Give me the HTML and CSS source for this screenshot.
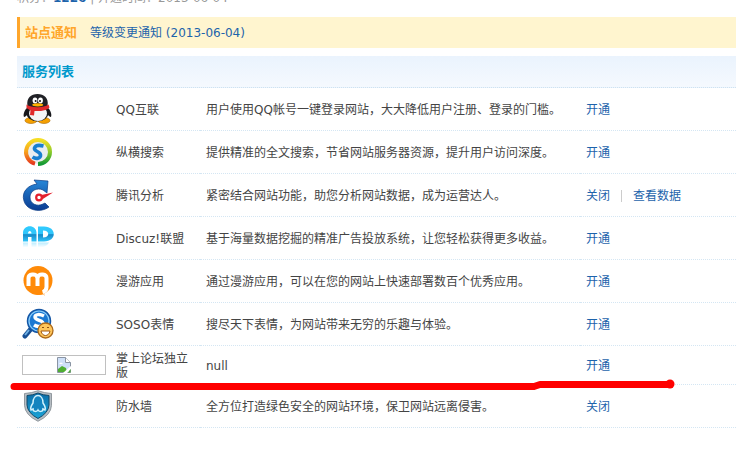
FILE: index.html
```html
<!DOCTYPE html>
<html lang="zh-CN">
<head>
<meta charset="utf-8">
<title>服务列表</title>
<link rel="stylesheet" href="styles.css">
</head>
<body>
<main class="page">
  <p class="summary">积分：<a href="#">1226</a> | 开通时间：2013-06-04</p>
  <div class="notice"><strong>站点通知</strong><a href="#">等级变更通知 (2013-06-04)</a></div>
  <section class="services">
    <table>
      <colgroup><col class="col-icon"><col class="col-name"><col class="col-text"><col></colgroup>
      <thead><tr><th colspan="4">服务列表</th></tr></thead>
      <tbody>
        <tr>
          <td><svg class="icon" viewBox="0 0 32 32" aria-hidden="true">
            <ellipse cx="9" cy="27.500" rx="6" ry="3" fill="#f5a000" stroke="#a86400" stroke-width=".6"/><ellipse cx="22" cy="27.500" rx="6" ry="3" fill="#f5a000" stroke="#a86400" stroke-width=".6"/>
            <path d="M6 14C2 17 1 22 2 24c1 0 3-2 4-3zM25 14c4 3 5 8 4 10-1 0-3-2-4-3z" fill="#17181c"/>
            <ellipse cx="15.500" cy="20" rx="11" ry="8.500" fill="#17181c"/><ellipse cx="16" cy="20.500" rx="9" ry="7.500" fill="#f4f5f7"/>
            <path d="M5.500 13C4 5 9 1 15.500 1S27 5 25.500 13c-3 4-17 4-20 0z" fill="#202126"/>
            <ellipse cx="13" cy="7.500" rx="2.400" ry="3" fill="#fff"/><ellipse cx="18.500" cy="7.500" rx="2.400" ry="3" fill="#fff"/><circle cx="13.600" cy="8" r="1" fill="#111"/><circle cx="18" cy="8" r="1" fill="#111"/>
            <ellipse cx="15.700" cy="11.800" rx="5.500" ry="1.600" fill="#ffb000"/>
            <path d="M4.500 11.500c5 3.500 17 3.500 22 0l1 3c-3 3-9 4-15 3.500l-.5 4.500-4-.5.500-4.500-4-2.500z" fill="#e02a2c"/>
          </svg></td>
          <td>QQ互联</td><td>用户使用QQ帐号一键登录网站，大大降低用户注册、登录的门槛。</td><td><a href="#">开通</a></td>
        </tr>
        <tr>
          <td><svg class="icon" viewBox="0 0 32 32" aria-hidden="true">
            <defs><linearGradient id="ringL" x2="0" y2="1"><stop stop-color="#f7dc23"/><stop offset=".5" stop-color="#f7a11d"/><stop offset="1" stop-color="#e63a1e"/></linearGradient><linearGradient id="ringR" x2="0" y2="1"><stop stop-color="#f3df28"/><stop offset=".5" stop-color="#8ccb2b"/><stop offset="1" stop-color="#149a35"/></linearGradient></defs>
            <circle cx="16" cy="16" r="12" fill="#e9edf0"/>
            <path d="M16.500 4a12 12 0 0 0-3.500 23.600" fill="none" stroke="url(#ringL)" stroke-width="4"/><path d="M16 4a12 12 0 0 1 0 24" fill="none" stroke="url(#ringR)" stroke-width="4"/>
            <path d="M21.500 10c-4-1-8-1-9 2-1 4 7 3 6 8-1 3-5 3-8 1" fill="none" stroke="#197fd0" stroke-width="3.600"/>
          </svg></td>
          <td>纵横搜索</td><td>提供精准的全文搜索，节省网站服务器资源，提升用户访问深度。</td><td><a href="#">开通</a></td>
        </tr>
        <tr>
          <td><svg class="icon" viewBox="0 0 32 32" aria-hidden="true">
            <defs><linearGradient id="dial" x2="0" y2="1"><stop stop-color="#2787d8"/><stop offset="1" stop-color="#0b3d93"/></linearGradient></defs>
            <path d="M12 1l14 1-1 12-4-3C15 8 8 12 8 18c0 7 7 10 13 7l2-1 4 4C19 34 5 32 2 22-1 13 6 6 15 5z" fill="url(#dial)" stroke="#0b3b84" stroke-width=".7"/>
            <path d="M31 13.500l-11 7-3-4z" fill="#e3202d"/><circle cx="17" cy="18.500" r="2.800" fill="#fff" stroke="#e3202d" stroke-width="2.200"/>
          </svg></td>
          <td>腾讯分析</td><td>紧密结合网站功能，助您分析网站数据，成为运营达人。</td><td><a href="#">关闭</a><span class="divider"></span><a href="#">查看数据</a></td>
        </tr>
        <tr>
          <td><svg class="icon" viewBox="0 0 32 32" aria-hidden="true">
            <defs><linearGradient id="ad" x2="0" y2="1"><stop stop-color="#30cbff"/><stop offset=".5" stop-color="#30c5fa"/><stop offset=".55" stop-color="#1689c8"/><stop offset="1" stop-color="#30c5fa"/></linearGradient><linearGradient id="reflect" x2="0" y2="1"><stop stop-color="#b9ecff"/><stop offset="1" stop-color="#fff"/></linearGradient></defs>
            <path d="M1 19.500V11C1 2 14.500 2 14.500 11v8.500h-5V15H6v4.500zm5-8h3.500C9.500 8 6 8 6 11.500zM16 4.500h6c13 0 13 15 0 15h-6zm5 4v7c7 0 7-7 0-7z" fill="url(#ad)" fill-rule="evenodd"/>
            <path d="M1 20.500h5v5H1zm8.500 0h5v5h-5zm6.500 0h11c-2 4-6 5-11 5z" fill="url(#reflect)"/>
          </svg></td>
          <td>Discuz!联盟</td><td>基于海量数据挖掘的精准广告投放系统，让您轻松获得更多收益。</td><td><a href="#">开通</a></td>
        </tr>
        <tr>
          <td><svg class="icon" viewBox="0 0 32 32" aria-hidden="true">
            <circle cx="16" cy="15.500" r="14.500" fill="#ff8a08"/>
            <path d="M6.500 21v-8c0-4 7-5 9-1 2-4 9-3 9 1v9q0 4-4 5" fill="none" stroke="#fff" stroke-width="4"/><path d="M15.500 12v9" stroke="#fff" stroke-width="4"/><path d="M8 24h13l-2 3 4 4-1-2c-6 2-11 0-14-5z" fill="#ff8a08"/>
          </svg></td>
          <td>漫游应用</td><td>通过漫游应用，可以在您的网站上快速部署数百个优秀应用。</td><td><a href="#">开通</a></td>
        </tr>
        <tr>
          <td><svg class="icon" viewBox="0 0 32 32" aria-hidden="true">
            <path d="M8 22l-5 6" stroke="#174f94" stroke-width="5" stroke-linecap="round"/><path d="M7 22l-4 5" stroke="#6eafe2" stroke-width="2"/>
            <circle cx="17" cy="13" r="11.500" fill="#1b78d2" stroke="#1556a4" stroke-width="1.500"/><circle cx="17" cy="13" r="10" fill="none" stroke="#8ccdf9" stroke-width="1.200"/>
            <path d="M22 8c-4-2-9-2-9 1 0 4 9 3 8 7-1 3-6 3-9 1" fill="none" stroke="#fff" stroke-width="3.500"/>
            <circle cx="23.500" cy="22.500" r="7.500" fill="#ffc65b" stroke="#ad6a1b" stroke-width="1.300"/><path d="M19 23h9c-1 6-8 6-9 0z" fill="#fff" stroke="#a45b12"/><path d="M20 20q1-2 2 0M25 20q1-2 2 0" fill="none" stroke="#8d4e0f"/>
          </svg></td>
          <td>SOSO表情</td><td>搜尽天下表情，为网站带来无穷的乐趣与体验。</td><td><a href="#">开通</a></td>
        </tr>
        <tr>
          <td><span class="missing"><svg viewBox="0 0 16 16" aria-hidden="true">
            <path d="M1.500.5h8l5 5v10h-13z" fill="#cfe0f8" stroke="#8a94a3"/><path d="M9.500.5v5h5" fill="#fff" stroke="#8a94a3"/><path d="M2 15v-3l4-3 4 2 1 4z" fill="#4fae32"/><path d="M3 7q2-3 4 0z" fill="#fff"/><path d="M7 16l9-8v3l-5 5z" fill="#fff"/><path d="M12 15.500h2.500V12z" fill="#4fae32"/>
          </svg></span></td>
          <td>掌上论坛独立版</td><td>null</td><td><a href="#">开通</a></td>
        </tr>
        <tr>
          <td><svg class="icon" viewBox="0 0 32 32" aria-hidden="true">
            <defs><linearGradient id="shield" x2="0" y2="1"><stop stop-color="#0c6ea9"/><stop offset="1" stop-color="#1ba3d6"/></linearGradient></defs>
            <path d="M2.500 3.500Q10 3 16 .7q6 2.300 13.500 2.800v12Q29 25 16 31.300 3 25 2.500 15.500z" fill="#b7bec4" stroke="#7d868d" stroke-width=".8"/>
            <path d="M5 5.500q6-.3 11-2.500 5 2.200 11 2.500V15q-.5 8-11 13.500Q5.500 23 5 15z" fill="url(#shield)" stroke="#134969"/>
            <path d="M11 13c0-10 10-10 10 0 2 3 3 5 2 7l-2-1c0 3-4 3-5 1-1 2-5 2-5-1l-2 1c-1-2 0-4 2-7z" fill="#1484bf" stroke="#d2f2fd" stroke-width="1.500"/>
          </svg></td>
          <td>防水墙</td><td>全方位打造绿色安全的网站环境，保卫网站远离侵害。</td><td><a href="#">关闭</a></td>
        </tr>
      </tbody>
    </table>
    <svg class="marker" viewBox="0 0 666 12" aria-hidden="true"><path d="M4 7.500H524L530 5.500H658" fill="none" stroke="#f00" stroke-width="7" stroke-linecap="round" stroke-linejoin="round"/><circle cx="660" cy="5" r="4.500" fill="#f00"/></svg>
  </section>
</main>
</body>
</html>
```
FILE: styles.css
```css
body {
  margin: 0;
  background: #fff;
  color: #444;
  font: 12px/14px "DejaVu Sans", "Noto Sans CJK SC", sans-serif;
}
a { color: #1d63ab; text-decoration: none; }
.page { padding-left: 17px; overflow: hidden; }
.summary { margin: -10px 0 0; line-height: 16px; color: #999; }
.summary a { font-weight: bold; }
.notice {
  display: flex;
  align-items: center;
  gap: 13px;
  height: 31px;
  margin-top: 11px;
  padding-left: 5px;
  border-left: 3px solid #ffa62b;
  background: #fff5cf;
}
.notice strong { color: #ffa62b; font-size: 13px; }
.services { position: relative; margin-top: 8px; }
table { width: 100%; border-collapse: separate; border-spacing: 0; table-layout: fixed; }
.col-icon { width: 93px; }
.col-name { width: 90px; }
.col-text { width: 380px; }
th {
  height: 31px;
  padding: 0 5px;
  border-bottom: 1px dotted #cfe2f0;
  background: linear-gradient(#eaf3fd, #f5f9fe);
  box-sizing: content-box;
  color: #0099cc;
  font-size: 13px;
  text-align: left;
}
td {
  padding: 6px 9px 4px 6px;
  border-bottom: 1px dotted #d4e6f3;
  vertical-align: middle;
}
td:first-child { padding: 5px 4px 5px 5px; }
.icon { display: block; width: 32px; height: 32px; }
.missing {
  display: flex;
  align-items: center;
  justify-content: center;
  height: 18px;
  border: 1px solid #c0c0c0;
}
.missing svg { width: 16px; height: 16px; }
.divider { display: inline-block; width: 1px; height: 12px; margin: 0 11px; background: #ccc; vertical-align: -2px; }
.marker { position: absolute; left: -7px; bottom: 37px; width: 666px; height: 12px; }
```
